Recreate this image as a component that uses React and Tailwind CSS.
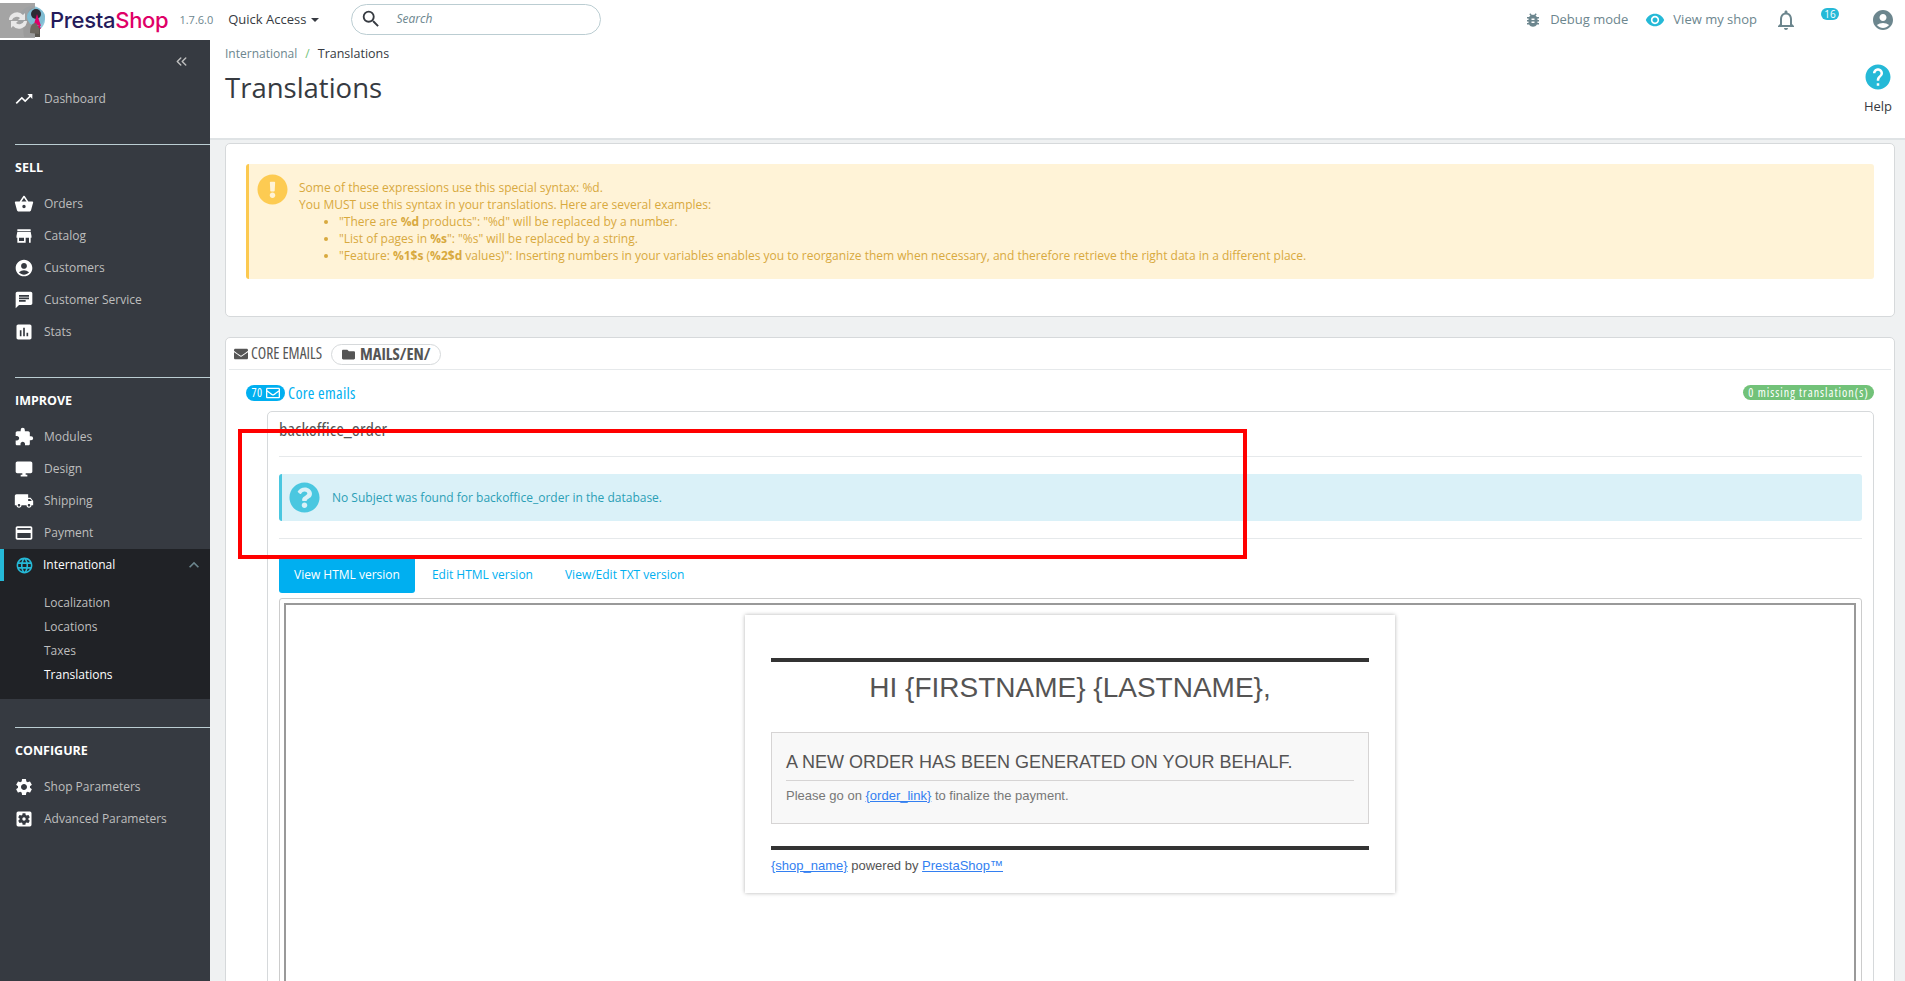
import { ChevronsLeft } from "lucide-react";
import {
  FaEnvelope,
  FaExclamationCircle,
  FaFolder,
  FaQuestionCircle,
  FaRegEnvelope,
} from "react-icons/fa";
import {
  MdAccountCircle,
  MdAssessment,
  MdBugReport,
  MdChat,
  MdCreditCard,
  MdDesktopWindows,
  MdExtension,
  MdHelp,
  MdKeyboardArrowUp,
  MdLanguage,
  MdLocalShipping,
  MdNotificationsNone,
  MdRemoveRedEye,
  MdSearch,
  MdSettings,
  MdSettingsApplications,
  MdShoppingBasket,
  MdStore,
  MdTrendingUp,
} from "react-icons/md";

const openSans = "font-['Open_Sans',sans-serif]";
const condensed = "font-['Open_Sans',sans-serif] [font-stretch:75%]";
const arial = "font-['Liberation_Sans',sans-serif]";

const NavItem = ({ icon: Icon, label }) => (
  <div className="flex h-8 items-center pl-[14px]">
    <Icon className="h-5 w-5 text-white" />
    <span className="ml-[10px] text-[12px] text-[#bebebe]">{label}</span>
  </div>
);

const NavSection = ({ title, children }) => (
  <div className="ml-[15px] border-t border-[#bbcdd2] pt-[14px]">
    <div className="text-[12.5px] leading-[18px] font-bold text-white">{title}</div>
    <div className="mt-[11px] -ml-[15px]">{children}</div>
  </div>
);

const Logo = () => (
  <div className="flex items-center">
    <svg width="50" height="35" viewBox="0 0 50 35" className="shrink-0">
      <circle cx="32" cy="16" r="13" fill="#8fc7dc" />
      <path d="M24 34c-2-9 0-17 7-20 5 0 9 3 9 9v11z" fill="#5a5750" />
      <path d="M36 13l5 13-7-3z" fill="#df0067" />
      <circle cx="33" cy="10" r="5" fill="#2e2b33" />
      <rect width="35" height="35" fill="#9f9f9f" fillOpacity="0.95" />
      <path d="M9 17a8 8 0 0 1 14-5l2-2v7h-7l2-2a5 5 0 0 0-8 2z" fill="#e8e8e8" />
      <path d="M27 18a8 8 0 0 1-14 5l-2 2v-7h7l-2 2a5 5 0 0 0 8-2z" fill="#e8e8e8" />
      <circle cx="36" cy="14" r="9" fill="#7fbcd2" />
      <circle cx="36" cy="11" r="5" fill="#2e2b33" />
      <path d="M37 11l4 12-7-2z" fill="#df0067" />
      <path d="M30 30c0-7 2-10 6-10l3 5v6z" fill="#6d685f" />
    </svg>
    <span className="text-[22px] leading-none font-medium tracking-[-0.3px] font-['Inter',sans-serif]">
      <span className="text-[#251b5b]">Presta</span>
      <span className="text-[#df0067]">Shop</span>
    </span>
  </div>
);

const Header = () => (
  <header className={`flex h-10 items-center bg-white ${openSans}`}>
    <Logo />
    <span className="ml-[11px] text-[11px] text-[#6c868e]">1.7.6.0</span>
    <div className="ml-[15px] flex items-center text-[13px] text-[#363a41]">
      Quick Access
      <span className="ml-[5px] h-0 w-0 border-x-[4px] border-t-[4px] border-x-transparent border-t-[#363a41]" />
    </div>
    <div className="ml-[32px] flex h-[31px] w-[250px] -translate-y-[1px] items-center rounded-[16px] border border-[#bbcdd2] pl-[8px]">
      <MdSearch className="h-[22px] w-[22px] text-[#363a41]" />
      <span className="ml-[14px] text-[12px] text-[#6c868e] italic">Search</span>
    </div>
    <div className="ml-auto flex items-center text-[13px] text-[#6c868e]">
      <MdBugReport className="h-[18px] w-[18px]" />
      <span className="ml-[8px]">Debug mode</span>
      <MdRemoveRedEye className="ml-[17px] h-5 w-5 text-[#25b9d7]" />
      <span className="ml-[8px]">View my shop</span>
      <MdNotificationsNone className="ml-[17px] h-6 w-6" />
      <span className="mb-[13px] ml-[23px] flex h-3 w-[18px] items-center justify-center rounded-full bg-[#25b9d7] text-[10px] leading-none text-white">
        16
      </span>
      <MdAccountCircle className="mr-[10px] ml-[32px] h-6 w-6" />
    </div>
  </header>
);

const Sidebar = () => (
  <aside className={`w-[210px] shrink-0 bg-[#363a41] ${openSans}`}>
    <div className="flex h-[43px] items-center justify-end pr-[20px]">
      <ChevronsLeft className="h-[17px] w-[17px] text-[#bebebe]" />
    </div>
    <NavItem icon={MdTrendingUp} label="Dashboard" />
    <div className="h-[29px]" />
    <NavSection title="SELL">
      <NavItem icon={MdShoppingBasket} label="Orders" />
      <NavItem icon={MdStore} label="Catalog" />
      <NavItem icon={MdAccountCircle} label="Customers" />
      <NavItem icon={MdChat} label="Customer Service" />
      <NavItem icon={MdAssessment} label="Stats" />
    </NavSection>
    <div className="h-[29px]" />
    <NavSection title="IMPROVE">
      <NavItem icon={MdExtension} label="Modules" />
      <NavItem icon={MdDesktopWindows} label="Design" />
      <NavItem icon={MdLocalShipping} label="Shipping" />
      <NavItem icon={MdCreditCard} label="Payment" />
      <div className="h-[150px] bg-[#202226]">
        <div className="flex h-8 items-center border-l-4 border-[#25b9d7] pl-[11px]">
          <MdLanguage className="h-[19px] w-[19px] text-[#25b9d7]" />
          <span className="ml-[9px] text-[12px] text-white">International</span>
          <MdKeyboardArrowUp className="mr-[6px] ml-auto h-5 w-5 text-[#6c868e]" />
        </div>
        <div className="pt-[10px] pl-[44px] text-[12px] leading-6 text-[#bebebe]">
          <div>Localization</div>
          <div>Locations</div>
          <div>Taxes</div>
          <div className="text-white">Translations</div>
        </div>
      </div>
    </NavSection>
    <div className="h-[28px]" />
    <NavSection title="CONFIGURE">
      <NavItem icon={MdSettings} label="Shop Parameters" />
      <NavItem icon={MdSettingsApplications} label="Advanced Parameters" />
    </NavSection>
  </aside>
);

const PageHead = () => (
  <div className={`flex h-[100px] justify-between border-b-2 border-[#dfe3e5] bg-white pl-[15px] ${openSans}`}>
    <div>
      <div className="pt-[5px] text-[12px] leading-[18px] text-[#6c868e]">
        International <span className="mx-[5px] text-[#72c279]">/</span>
        <span className="ml-[3px] text-[12.5px] text-[#363a41]">Translations</span>
      </div>
      <h1 className="mt-[6px] text-[27.5px] leading-[38px] text-[#363a41]">Translations</h1>
    </div>
    <div className="mr-[12px] flex flex-col items-center pt-[22px] text-[13px] text-[#363a41]">
      <MdHelp className="h-[30px] w-[30px] text-[#25b9d7]" />
      <span className="mt-[5px]">Help</span>
    </div>
  </div>
);

const WarningAlert = () => (
  <div className="flex h-[115px] rounded-[3px] border-l-[3px] border-[#fcc94f] bg-[#fff3d7] pt-[15px] pl-[8px] text-[12px] leading-[17px] text-[#d8a93e]">
    <FaExclamationCircle className="-mt-[5px] h-[31px] w-[31px] shrink-0 text-[#fdcb52]" />
    <div className="ml-[11px]">
      <div>Some of these expressions use this special syntax: %d.</div>
      <div>You MUST use this syntax in your translations. Here are several examples:</div>
      <ul className="list-disc pl-[40px]">
        <li>
          "There are <b>%d</b> products": "%d" will be replaced by a number.
        </li>
        <li>
          "List of pages in <b>%s</b>": "%s" will be replaced by a string.
        </li>
        <li>
          "Feature: <b>%1$s</b> (<b>%2$d</b> values)": Inserting numbers in your variables enables you to reorganize them when necessary, and therefore retrieve the right data in a different place.
        </li>
      </ul>
    </div>
  </div>
);

const EmailPreview = () => (
  <div className={`mx-auto mt-[10px] h-[278px] w-[650px] bg-white px-[26px] pt-[43px] shadow-[0_0_4px_rgba(0,0,0,0.3)] ${arial}`}>
    <div className="h-1 bg-[#333]" />
    <div className="mt-[8px] text-center text-[28px] leading-[36px] text-[#555454]">
      HI {"{FIRSTNAME}"} {"{LASTNAME}"},
    </div>
    <div className="mt-[26px] h-[92px] border border-[#d6d4d4] bg-[#f8f8f8] px-[14px] pt-[17px]">
      <div className="border-b border-[#d6d4d4] pb-[6px] text-[18px] leading-[24px] text-[#555454]">
        A NEW ORDER HAS BEEN GENERATED ON YOUR BEHALF.
      </div>
      <div className="mt-[7px] text-[13px] leading-[15px] text-[#777]">
        Please go on <a className="text-[#337ff1] underline">{"{order_link}"}</a> to finalize the payment.
      </div>
    </div>
    <div className="mt-[22px] h-1 bg-[#333]" />
    <div className="mt-[8px] text-[13px] leading-[15px] text-[#555454]">
      <a className="text-[#337ff1] underline">{"{shop_name}"}</a> powered by{" "}
      <a className="text-[#337ff1] underline">PrestaShop™</a>
    </div>
  </div>
);

const CoreEmails = () => (
  <section className="mt-[20px] h-[700px] rounded-[5px] border border-[#d6d9db] bg-white px-[3px] pt-[1px]">
    <div className={`flex h-[31px] items-center border-b border-[#e6e9eb] pl-[5px] text-[#555] ${condensed}`}>
      <FaEnvelope className="h-[14px] w-[14px]" />
      <span className="ml-[3px] text-[15.5px]">CORE EMAILS</span>
      <span className="ml-[9px] flex h-[21px] items-center rounded-full border border-[#d6d9db] px-[10px] text-[16.5px] font-bold">
        <FaFolder className="mr-[5px] h-[13px] w-[13px]" />
        MAILS/EN/
      </span>
    </div>
    <div className="pr-[17px] pl-[17px]">
      <div className={`flex h-[41px] items-center justify-between pt-[4px] ${condensed}`}>
        <div className="flex items-center text-[#00aff0]">
          <span className="flex h-4 w-[39px] items-center justify-center rounded-full bg-[#00aff0] text-[12px] tracking-[0.5px] text-white">
            70
            <FaRegEnvelope className="ml-[3px] h-[14px] w-[14px]" />
          </span>
          <span className="ml-[3px] text-[16px] tracking-[0.3px]">Core emails</span>
        </div>
        <span className="flex h-[15px] w-[131px] items-center justify-center rounded-full bg-[#72c279] text-[12px] tracking-[1px] text-white">
          0 missing translation(s)
        </span>
      </div>
      <div className={`ml-[21px] h-[600px] rounded-t-[5px] border border-[#d6d9db] px-[11px] ${openSans}`}>
        <div className={`h-[45px] border-b border-[#e6e9eb] pt-[6px] text-[18.5px] leading-[22px] text-[#555] ${condensed}`}>
          backoffice_order
        </div>
        <div className="mt-[17px] flex h-[47px] items-center rounded-[3px] border-l-[3px] border-[#4ac7e0] bg-[#daf1f8] pl-[7px] text-[12px] text-[#2b9fb6]">
          <FaQuestionCircle className="h-[31px] w-[31px] text-[#4ac7e0]" />
          <span className="ml-[12px]">No Subject was found for backoffice_order in the database.</span>
        </div>
        <div className="mt-[17px] border-t border-[#e6e9eb]" />
        <div className="mt-[19px] flex gap-[2px] text-[12px] text-[#00aff0]">
          <div className="flex h-[35px] items-center rounded-b-[3px] bg-[#00aff0] px-[15px] pb-[2px] text-white">View HTML version</div>
          <div className="flex h-[35px] items-center px-[15px] pb-[2px]">Edit HTML version</div>
          <div className="flex h-[35px] items-center px-[15px] pb-[2px]">View/Edit TXT version</div>
        </div>
        <div className="mt-[5px] h-[400px] rounded-t-[3px] border border-[#cccccc] pt-[4px] pr-[5px] pl-[4px]">
          <div className="h-full border-2 border-b-0 border-[#999999] bg-white">
            <EmailPreview />
          </div>
        </div>
      </div>
    </div>
  </section>
);

const App = () => (
  <div className="relative h-[981px] w-[1905px] overflow-hidden bg-[#eff1f2]">
    <Header />
    <div className="flex h-[941px]">
      <Sidebar />
      <main className="min-w-0 flex-1">
        <PageHead />
        <div className="pt-[3px] pr-[10px] pl-[15px]">
          <section className={`h-[174px] rounded-[5px] border border-[#d6d9db] bg-white px-[20px] pt-[20px] ${openSans}`}>
            <WarningAlert />
          </section>
          <CoreEmails />
        </div>
      </main>
    </div>
    {/* red annotation box drawn over the screenshot */}
    <div className="absolute top-[429px] left-[238px] h-[130px] w-[1009px] border-4 border-[#ff0000]" />
  </div>
);

export default App;
